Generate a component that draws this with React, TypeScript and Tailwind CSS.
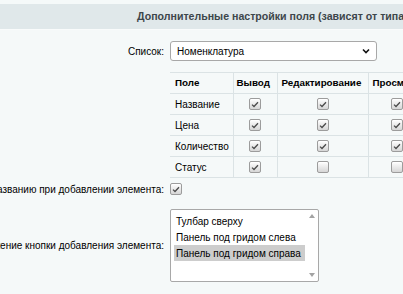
import React from "react";

function Box({ checked }: { checked: boolean }) {
  return (
    <span className="inline-flex h-[12px] w-[12px] items-center justify-center rounded-[2px] border border-[#9c9c9c] bg-gradient-to-b from-[#ffffff] to-[#d6d6d6] align-middle shadow-[inset_0_1px_0_#fff]">
      {checked && (
        <svg width="8" height="7" viewBox="0 0 8 7">
          <path d="M1 3.6 L3 5.5 L7 1.2" fill="none" stroke="#4a4a4a" strokeWidth="1.3" />
        </svg>
      )}
    </span>
  );
}

const rows: [string, boolean, boolean, boolean][] = [
  ["Название", true, true, true],
  ["Цена", true, true, true],
  ["Количество", true, true, true],
  ["Статус", true, false, false],
];

export default function App() {
  return (
    <div
      className="h-[294px] w-[403px] overflow-hidden bg-[#f5f9f9] text-[10px] text-black"
      style={{ fontFamily: '"Liberation Sans", Arial, sans-serif' }}
    >
      <div className="h-[4px]" />
      <div className="flex h-[26px] items-center overflow-hidden whitespace-nowrap border-b border-[#f9fbfb] bg-[#e0e8ea] pl-[137px] text-[10.6px] font-bold text-[#3d464b]">
        Дополнительные настройки поля (зависят от типа)
      </div>

      <div className="grid grid-cols-[165px_1fr] gap-x-[5px] pt-[11px]">
        {/* Список */}
        <div className="flex items-center justify-end whitespace-nowrap pr-[1px]">Список:</div>
        <div className="flex">
          <div className="flex h-[20px] w-[207px] items-center justify-between rounded-[3px] border border-[#a8a8a8] bg-white pl-[6px] pr-[6px]">
            <span>Номенклатура</span>
            <svg width="8" height="6" viewBox="0 0 8 6">
              <path d="M1 1.5 L4 4.5 L7 1.5" fill="none" stroke="#111" strokeWidth="1.6" />
            </svg>
          </div>
        </div>

        {/* Table */}
        <div />
        <div className="mt-[11px] overflow-hidden">
          <table className="w-[258px] table-fixed border-collapse">
            <colgroup>
              <col className="w-[63px]" />
              <col className="w-[44px]" />
              <col className="w-[91px]" />
              <col className="w-[60px]" />
            </colgroup>
            <thead>
              <tr className="h-[21px] text-[9.8px]">
                <th className="overflow-hidden whitespace-nowrap border border-l-0 border-[#dbe3e5] pl-[5px] text-left font-bold">Поле</th>
                <th className="overflow-hidden whitespace-nowrap border border-[#dbe3e5] pl-[3px] text-left font-bold">Вывод</th>
                <th className="overflow-hidden whitespace-nowrap border border-[#dbe3e5] pl-[4px] text-left font-bold">Редактирование</th>
                <th className="overflow-hidden whitespace-nowrap border border-[#dbe3e5] pl-[4px] text-left font-bold">Просмотр</th>
              </tr>
            </thead>
            <tbody>
              {rows.map(([name, a, b, c]) => (
                <tr key={name} className="h-[21px]">
                  <td className="whitespace-nowrap border border-l-0 border-[#dbe3e5] pl-[5px]">{name}</td>
                  <td className="border border-[#dbe3e5] text-center leading-none">
                    <Box checked={a} />
                  </td>
                  <td className="border border-[#dbe3e5] text-center leading-none">
                    <Box checked={b} />
                  </td>
                  <td className="border border-[#dbe3e5] pl-[22px] text-left leading-none">
                    <Box checked={c} />
                  </td>
                </tr>
              ))}
            </tbody>
          </table>
        </div>

        {/* Checkbox row */}
        <div className="mt-[5px] flex h-[12px] items-center justify-end whitespace-nowrap pr-[1px]">
          Разрешить поиск по названию при добавлении элемента:
        </div>
        <div className="mt-[5px] flex h-[12px] items-center">
          <Box checked={true} />
        </div>

        {/* Listbox row */}
        <div className="mt-[14px] flex h-[73px] items-center justify-end whitespace-nowrap pr-[1px]">
          Расположение кнопки добавления элемента:
        </div>
        <div className="mt-[14px] flex">
          <div className="flex h-[73px] w-[149px] rounded-[2px] border border-[#a8a8a8] bg-white">
            <div className="flex flex-1 flex-col pl-[3px] pt-[3px]">
              <div className="flex h-[16px] items-center pl-[2px]">Тулбар сверху</div>
              <div className="flex h-[16px] items-center pl-[2px]">Панель под гридом слева</div>
              <div className="flex h-[16px] items-center bg-[#cdcdcd] pl-[2px]">Панель под гридом справа</div>
            </div>
            <div className="flex w-[13px] flex-col items-center justify-between py-[4px]">
              <svg width="6" height="4" viewBox="0 0 6 4">
                <path d="M0 4 L3 0 L6 4 Z" fill="#a3a3a3" />
              </svg>
              <svg width="6" height="4" viewBox="0 0 6 4">
                <path d="M0 0 L3 4 L6 0 Z" fill="#a3a3a3" />
              </svg>
            </div>
          </div>
        </div>
      </div>
    </div>
  );
}
